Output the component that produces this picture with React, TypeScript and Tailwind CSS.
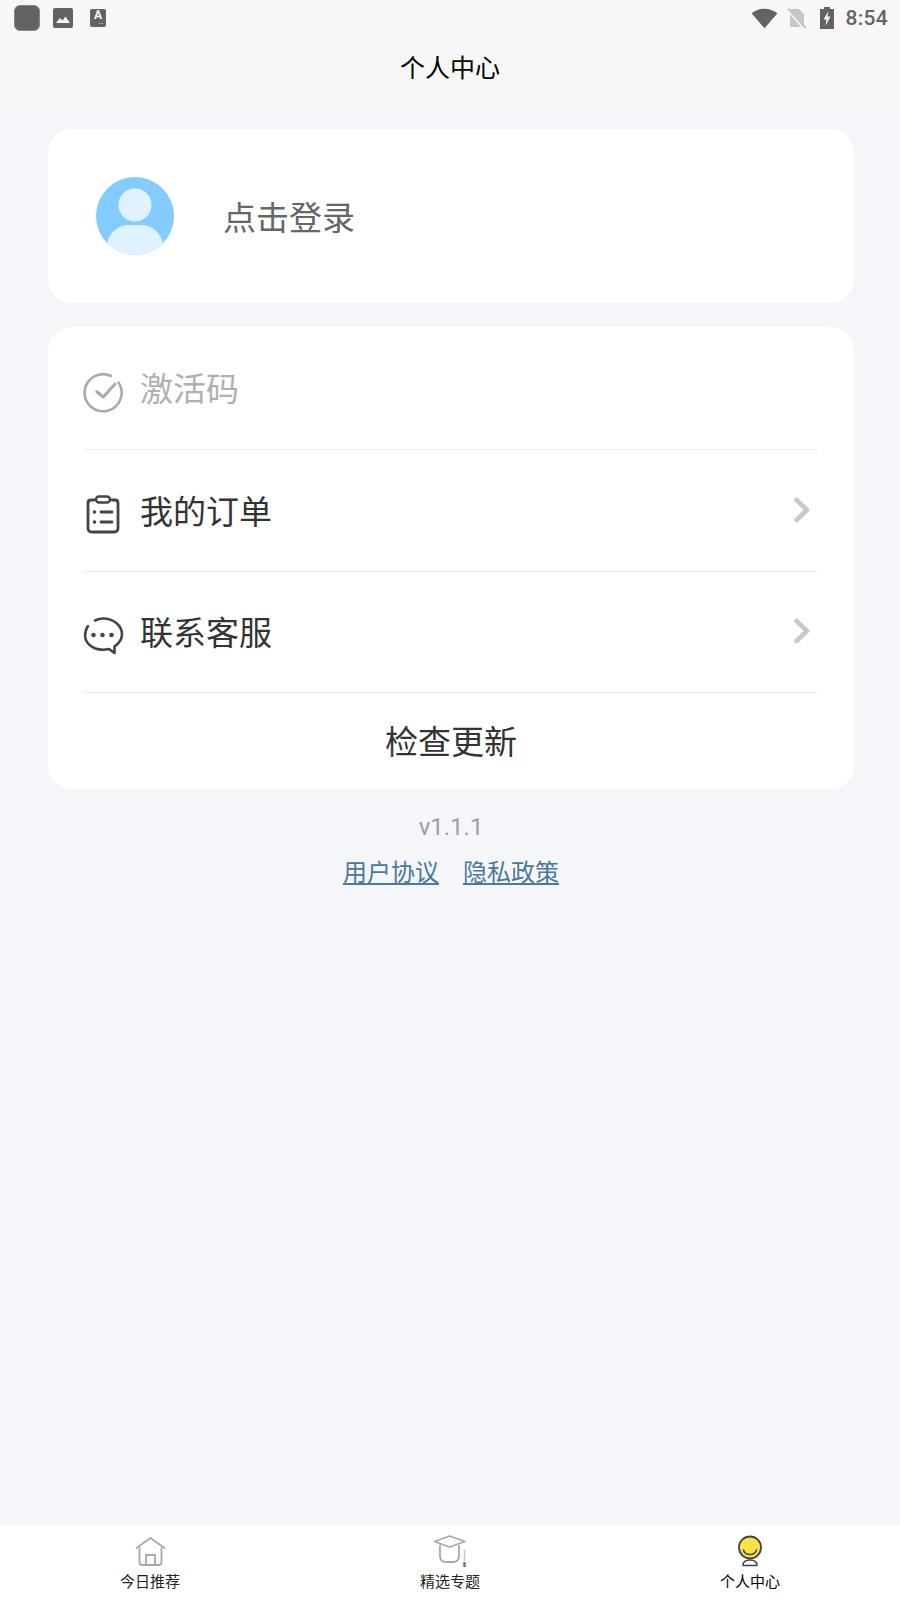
const cjk = "font-['Roboto','Noto_Sans_CJK_SC',sans-serif]"

function Chevron() {
  return (
    <svg width="20" height="28" viewBox="0 0 20 28" className="ml-auto mr-[6px]" fill="none">
      <path d="M4.500 3 L15 13 L4.500 23" stroke="#c8c8c8" strokeWidth="4.500" strokeLinecap="round" strokeLinejoin="round" />
    </svg>
  )
}

function StatusBar() {
  return (
    <div className="h-[36px] flex items-center pl-[14px] pr-[12px]">
      <div className="w-[26px] h-[26px] rounded-[6px] bg-[#636363] border border-[#888]" />
      <div className="w-[20px] h-[20px] ml-[13px] rounded-[2px] bg-[#636363] flex items-end">
        <svg width="20" height="20" viewBox="0 0 20 20">
          <path d="M3 15 L7 10 L9.500 12.500 L12.500 8.500 L17 15 Z" fill="#f7f7f7" />
        </svg>
      </div>
      <div className="w-[16px] h-[18px] ml-[17px] rounded-[2px] bg-[#636363] flex flex-col items-center font-['Roboto',sans-serif]">
        <span className="text-[12px] leading-[13px] font-bold text-[#f7f7f7]">A</span>
        <span className="text-[5px] leading-[3px] ml-[6px] text-[#f7f7f7] font-bold">···</span>
      </div>
      <svg width="27" height="21" viewBox="0 0 26 20" className="ml-auto">
        <path d="M0.500 5 C7.500 -1 18.500 -1 25.500 5 L13 19.500 Z" fill="#636363" />
      </svg>
      <svg width="20" height="22" viewBox="0 0 20 22" className="ml-[9px]">
        <path d="M3 2 H12 L17 7 V20 H3 Z" fill="#c6c6c6" />
        <path d="M1 1.500 L19 21" stroke="#c6c6c6" strokeWidth="2" />
        <path d="M1 4 L16 21" stroke="#f7f7f7" strokeWidth="1.500" />
      </svg>
      <svg width="14" height="22" viewBox="0 0 14 22" className="ml-[13px]">
        <path d="M4 0 H10 V2 H14 V22 H0 V2 H4 Z" fill="#636363" />
        <path d="M8.500 4 L3.500 12.500 H6.500 L5.500 19 L10.500 9.500 H7.500 Z" fill="#f7f7f7" />
      </svg>
      <span className="ml-[11px] text-[21px] leading-none font-medium text-[#636363] font-['Roboto',sans-serif] tracking-[0.3px]">8:54</span>
    </div>
  )
}

export default function App() {
  return (
    <div className={`w-[900px] h-[1600px] flex flex-col bg-[#f4f6fa] ${cjk}`}>
      <div className="bg-[#f7f7f7] h-[101px] shrink-0">
        <StatusBar />
        <div className="h-[65px] flex items-center justify-center text-[25px] text-black">个人中心</div>
      </div>

      <div className="flex-1 pl-[48px] pr-[46px] pt-[28px]">
        <div className="h-[174px] bg-white rounded-[24px] flex items-center pl-[48px]">
          <svg width="78" height="78" viewBox="0 0 78 78">
            <defs>
              <clipPath id="avatar"><circle cx="39" cy="39" r="39" /></clipPath>
            </defs>
            <circle cx="39" cy="39" r="39" fill="#84cbff" />
            <circle cx="39" cy="28" r="16.500" fill="#e1f2ff" />
            <path d="M11 66 C14 54 24 48 32 48 H46 C54 48 64 54 67 66 C60 74 50 78 39 78 C28 78 18 74 11 66 Z" fill="#e1f2ff" clipPath="url(#avatar)" />
          </svg>
          <span className="ml-[49px] text-[33px] leading-none text-[#666666] mt-[5px]">点击登录</span>
        </div>

        <div className="mt-[24px] h-[462px] bg-white rounded-[24px] px-[36px] flex flex-col">
          <div className="h-[123px] flex items-center border-b border-[#eeeeee]">
            <svg width="40" height="40" viewBox="0 0 40 40" fill="none" className="mt-[6px] ml-[-1px] mr-[1px] overflow-visible">
              <path d="M28 5 A18.500 18.500 0 1 0 35.500 11.500" stroke="#aaaaaa" strokeWidth="2.600" strokeLinecap="round" />
              <path d="M13.700 20.700 L20.300 26 L32 13" stroke="#aaaaaa" strokeWidth="3" strokeLinecap="round" strokeLinejoin="round" />
            </svg>
            <span className="ml-[16px] text-[33px] leading-none text-[#b0b0b0] mt-[3px]">激活码</span>
          </div>

          <div className="h-[122px] flex items-center border-b border-[#eeeeee]">
            <svg width="40" height="40" viewBox="0 0 40 40" fill="none" className="mt-[6px] ml-[-1px] mr-[1px]">
              <path d="M11 6 H8 Q5 6 5 9 V34 Q5 38 9 38 H31 Q35 38 35 34 V9 Q35 6 32 6 H29" stroke="#444444" strokeWidth="2.800" strokeLinecap="round" />
              <rect x="13" y="2.500" width="14" height="6" rx="3" stroke="#444444" strokeWidth="2.400" />
              <circle cx="11.500" cy="18" r="1.800" fill="#444444" />
              <circle cx="11.500" cy="28" r="1.800" fill="#444444" />
              <path d="M18 18 H29 M18 28 H29" stroke="#444444" strokeWidth="2.800" strokeLinecap="round" />
            </svg>
            <span className="ml-[16px] text-[33px] leading-none text-[#333333] mt-[3px]">我的订单</span>
            <Chevron />
          </div>

          <div className="h-[121px] flex items-center border-b border-[#eeeeee]">
            <svg width="40" height="40" viewBox="0 0 40 40" fill="none" className="mt-[6px] ml-[-1px] mr-[1px] overflow-visible">
              <path d="M5 11 C1 17 1 25 6 29.500 C11 34 19 35.500 26 34 L31.500 38 L31.500 31.500 C36.500 28 39 24 39 19.500 C39 10 30 3.500 20 3.500 C17 3.500 14.500 4.200 12 5.500" stroke="#444444" strokeWidth="2.600" strokeLinecap="round" strokeLinejoin="round" />
              <circle cx="10.500" cy="20" r="2.300" fill="#444444" />
              <circle cx="19.500" cy="20" r="2.300" fill="#444444" />
              <circle cx="28.500" cy="20" r="2.300" fill="#444444" />
            </svg>
            <span className="ml-[16px] text-[33px] leading-none text-[#333333] mt-[3px]">联系客服</span>
            <Chevron />
          </div>

          <div className="flex-1 flex items-center justify-center text-[33px] leading-none text-[#333333] pt-[3px]">检查更新</div>
        </div>

        <div className="mt-[24px] text-center text-[24px] leading-[28px] text-[#a0a0a0]">v1.1.1</div>
        <div className="mt-[16px] flex justify-center gap-[24px] text-[24px] leading-[32px] text-[#4a78a0] underline">
          <span>用户协议</span>
          <span>隐私政策</span>
        </div>
      </div>

      <div className="h-[75px] bg-white grid grid-cols-3 shrink-0">
        <div className="flex flex-col items-center pt-[10px]">
          <svg width="32" height="32" viewBox="0 0 32 32" fill="none">
            <path d="M2.500 13 L16.500 3 L30.500 13" stroke="#a8a8a8" strokeWidth="1.800" strokeLinecap="round" strokeLinejoin="round" />
            <path d="M5.500 13 V27 Q5.500 30 8.500 30 H24.500 Q27.500 30 27.500 27 V13" stroke="#a8a8a8" strokeWidth="1.800" strokeLinecap="round" />
            <path d="M12 30 V20 H21 V30" stroke="#a8a8a8" strokeWidth="1.800" />
          </svg>
          <span className="text-[15px] leading-[20px] mt-[5px] text-[#222222]">今日推荐</span>
        </div>
        <div className="flex flex-col items-center pt-[10px]">
          <svg width="32" height="32" viewBox="0 0 32 32" fill="none" className="ml-[-1px]">
            <path d="M15.500 1 L31 6.500 L15.500 12 L0.500 6.500 Z" stroke="#a8a8a8" strokeWidth="1.800" strokeLinejoin="round" />
            <path d="M6 10 V21 Q6 27 12 27 H19 Q25 27 25 21 V10" stroke="#a8a8a8" strokeWidth="1.800" />
            <path d="M30.500 15 V26" stroke="#c4c4c4" strokeWidth="1.500" />
            <path d="M30.500 27 V32" stroke="#777777" strokeWidth="2.500" />
          </svg>
          <span className="text-[15px] leading-[20px] mt-[5px] text-[#222222]">精选专题</span>
        </div>
        <div className="flex flex-col items-center pt-[10px]">
          <svg width="32" height="32" viewBox="0 0 32 32" fill="none">
            <circle cx="16" cy="12.500" r="11" fill="#f6e24a" stroke="#444444" strokeWidth="1.800" />
            <path d="M9.500 15 C11 21 21 21 22.500 15" stroke="#444444" strokeWidth="1.500" strokeLinecap="round" />
            <path d="M9 30.500 C8.500 27 12 25 16 25 C20 25 23.500 27 23 30.500 Z" stroke="#444444" strokeWidth="1.500" strokeLinejoin="round" />
          </svg>
          <span className="text-[15px] leading-[20px] mt-[5px] text-black">个人中心</span>
        </div>
      </div>
    </div>
  )
}
